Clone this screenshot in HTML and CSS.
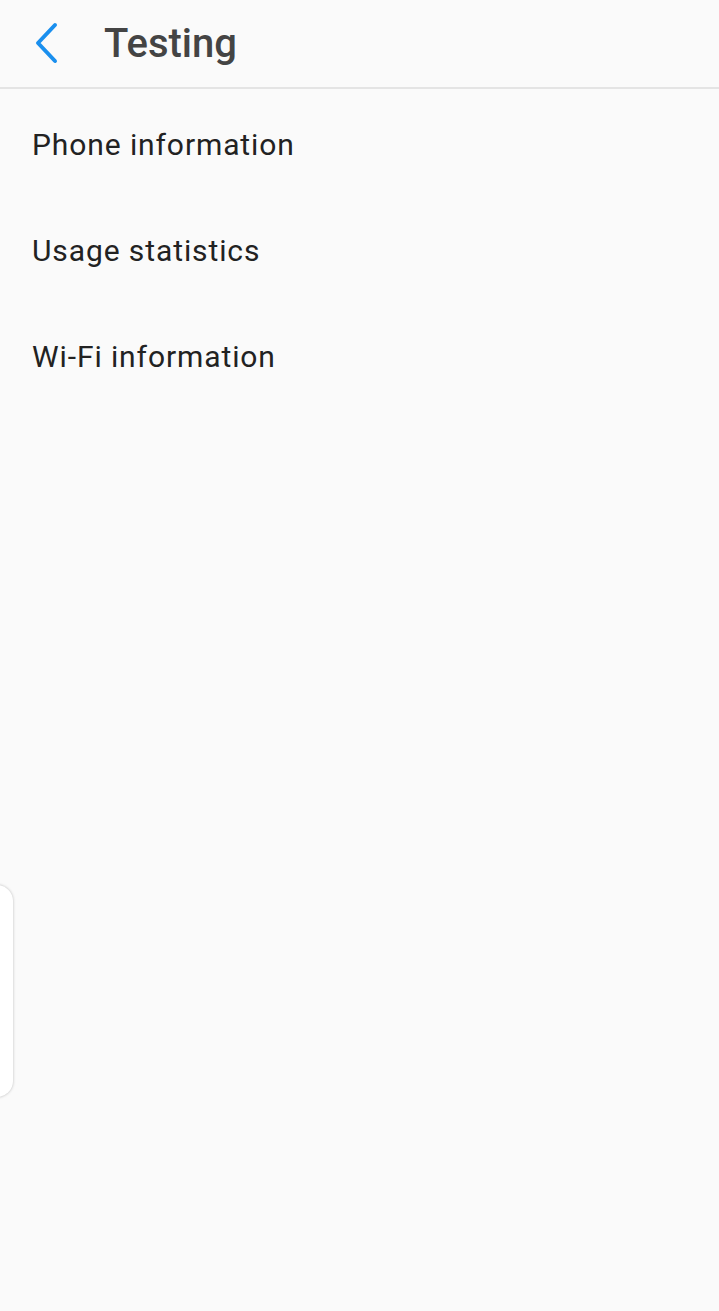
FILE: index.html
```html
<!DOCTYPE html>
<html lang="en">
<head>
<meta charset="utf-8">
<title>Testing</title>
<link rel="stylesheet" href="styles.css">
</head>
<body>
<div class="screen">
  <header class="appbar">
    <button class="back" aria-label="Back">
      <svg width="26" height="42" viewBox="0 0 26 42"><path d="M21 3 L4 21 L21 39" fill="none" stroke="#1a8fee" stroke-width="4" stroke-linecap="round" stroke-linejoin="round"/></svg>
    </button>
    <h1 class="title">Testing</h1>
  </header>
  <ul class="list">
    <li class="item">Phone information</li>
    <li class="item">Usage statistics</li>
    <li class="item">Wi-Fi information</li>
  </ul>
  <div class="edge-tab"></div>
</div>
</body>
</html>
```

FILE: styles.css
```css
html, body {
  margin: 0;
  padding: 0;
  background: #fafafa;
}
body {
  font-family: Roboto, "Noto Sans", sans-serif;
  width: 719px;
  height: 1311px;
  overflow: hidden;
}
.screen {
  position: relative;
  height: 1311px;
}
.appbar {
  display: flex;
  align-items: center;
  border-bottom: 2px solid #e4e4e4;
  box-sizing: border-box;
  height: 89px;
}
.back {
  border: 0;
  background: none;
  padding: 0;
  margin-left: 34px;
  width: 26px;
  height: 42px;
  display: flex;
  margin-top: -2px;
}
.title {
  margin: 0 0 0 44px;
  font-size: 40px;
  font-weight: 500;
  color: #444444;
  letter-spacing: 0;
}
.list {
  list-style: none;
  margin: 0;
  padding: 2px 0 0 0;
}
.item {
  height: 106px;
  display: flex;
  align-items: center;
  padding-left: 32px;
  font-size: 30px;
  letter-spacing: 0.9px;
  color: #222222;
}
.edge-tab {
  position: absolute;
  left: -20px;
  top: 885px;
  width: 33px;
  height: 212px;
  background: #ffffff;
  border-radius: 16px;
  box-shadow: 0 0 3px rgba(0,0,0,0.25);
}
```
